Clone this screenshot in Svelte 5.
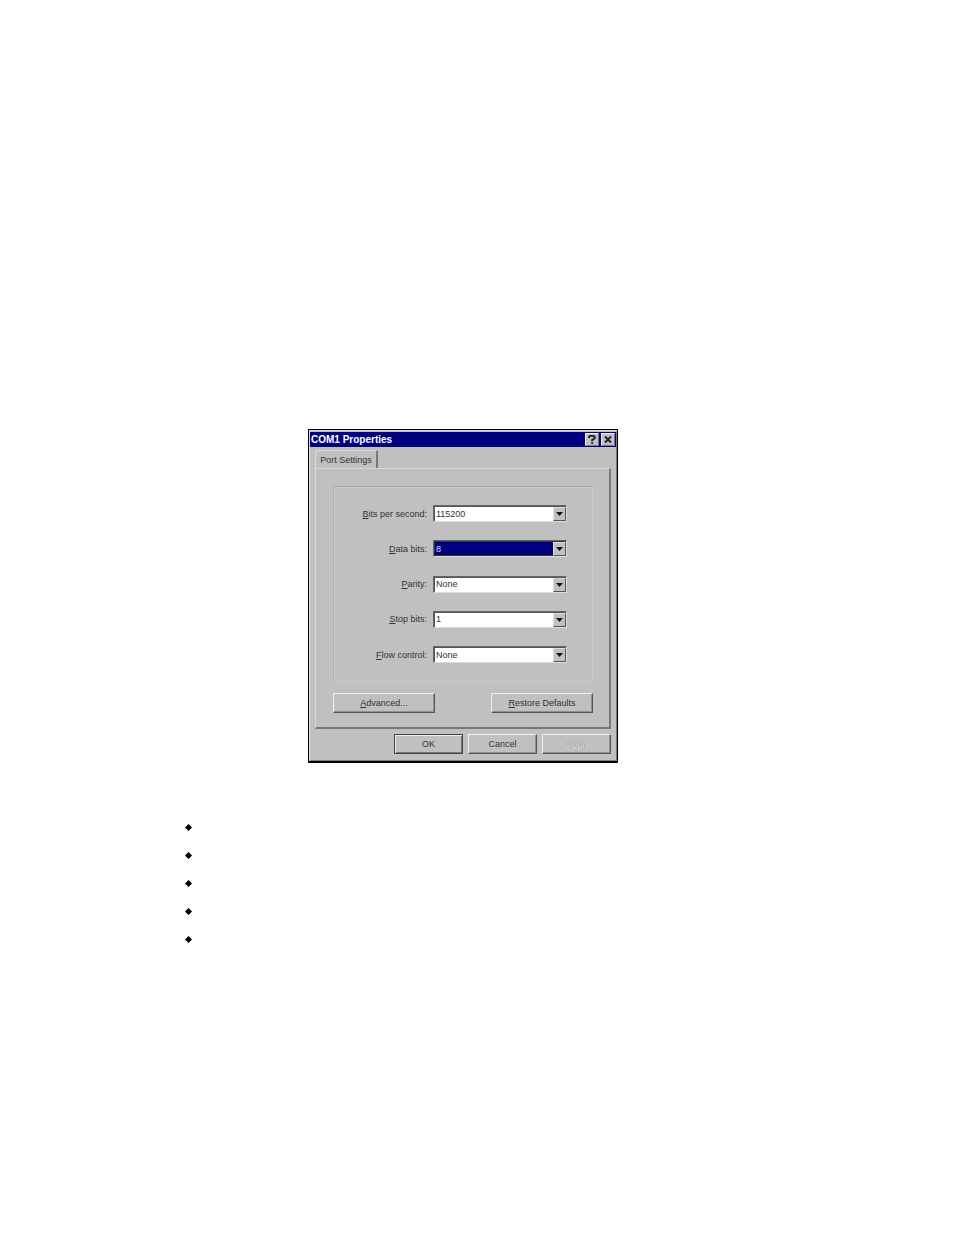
<script>
  let fields = [
    { id: "bits", key: "B", rest: "its per second:", value: "115200", options: ["9600", "57600", "115200"] },
    { id: "data", key: "D", rest: "ata bits:", value: "8", options: ["7", "8"], active: true },
    { id: "parity", key: "P", rest: "arity:", value: "None", options: ["None", "Even", "Odd"] },
    { id: "stop", key: "S", rest: "top bits:", value: "1", options: ["1", "2"] },
    { id: "flow", key: "F", rest: "low control:", value: "None", options: ["None", "Hardware"] },
  ];
  let bullets = [1, 2, 3, 4, 5];
</script>

<main>
  <section class="window" aria-label="COM1 Properties">
    <header>
      <h1>COM1 Properties</h1>
      <button class="caption" aria-label="Help">
        <svg width="8" height="9" viewBox="0 0 8 9">
          <path d="M1 3V1.8L2 .8H5.5L6.7 2V3.2L4.2 5V6.2M4.2 7.2V9" />
        </svg>
      </button>
      <button class="caption" aria-label="Close">
        <svg width="8" height="9" viewBox="0 0 8 9">
          <path d="M1 1.5L7 7.5M7 1.5L1 7.5" />
        </svg>
      </button>
    </header>

    <div class="body">
      <div role="tablist">
        <button class="tab" role="tab" aria-selected="true">Port Settings</button>
      </div>
      <div class="panel">
        <div class="group">
          {#each fields as field}
            <div class="row">
              <label for={field.id}><u>{field.key}</u>{field.rest}</label>
              <div class="combo" class:active={field.active}>
                <select id={field.id} bind:value={field.value}>
                  {#each field.options as option}
                    <option>{option}</option>
                  {/each}
                </select>
                <span class="arrow">
                  <svg width="7" height="4" viewBox="0 0 7 4">
                    <path d="M0 0H7L3.5 4Z" />
                  </svg>
                </span>
              </div>
            </div>
          {/each}
        </div>
        <div class="tools">
          <button class="btn wide"><u>A</u>dvanced...</button>
          <button class="btn wide"><u>R</u>estore Defaults</button>
        </div>
      </div>
      <footer>
        <button class="btn default">OK</button>
        <button class="btn">Cancel</button>
        <button class="btn" disabled>Apply</button>
      </footer>
    </div>
  </section>

  <ul>
    {#each bullets as bullet}
      <li>
        <svg width="7" height="7" viewBox="0 0 7 7">
          <path d="M3.5 0L7 3.5L3.5 7L0 3.5Z" />
        </svg>
      </li>
    {/each}
  </ul>
</main>

<style>
  :global(body) {
    margin: 0;
    background: #fff;
  }

  main {
    padding: 429px 213px 40px 185px;
    font-family: "Liberation Sans", Arial, sans-serif;
    font-size: 9px;
    line-height: 12px;
    color: #333;
  }

  button,
  select {
    font: inherit;
    color: inherit;
    margin: 0;
    padding: 0;
    box-sizing: border-box;
  }

  .window {
    box-sizing: border-box;
    max-width: 310px;
    margin: 0 auto;
    background: #c0c0c0;
    border: 1px solid #000;
    border-bottom-width: 2px;
    box-shadow: inset 1px 1px #dcdcdc, inset -1px -1px #808080;
    padding: 2px 1px 7px;
  }

  header {
    display: flex;
    align-items: center;
    gap: 2px;
    height: 15px;
    padding: 0 1px;
    background: #000080;
  }

  h1 {
    flex: 1;
    margin: 0;
    font-size: 10px;
    line-height: 12px;
    color: #fff;
  }

  .caption {
    display: flex;
    align-items: center;
    justify-content: center;
    width: 14px;
    height: 13px;
    background: #c0c0c0;
    border: 1px solid;
    border-color: #eee #777 #777 #eee;
  }

  .caption path {
    fill: none;
    stroke: #222;
    stroke-width: 2;
  }

  .body {
    padding: 3px 5px 0;
  }

  .tab {
    display: block;
    height: 18px;
    width: 63px;
    background: #c0c0c0;
    border: 1px solid #d8d8d8;
    border-right: 2px solid #777;
    border-bottom: none;
    border-radius: 2px 2px 0 0;
    white-space: nowrap;
  }

  .panel {
    border: 1px solid #d8d8d8;
    border-right: 2px solid #777;
    border-bottom: 2px solid #777;
    padding: 17px 16px 14px 17px;
  }

  .group {
    display: flex;
    flex-direction: column;
    justify-content: space-between;
    box-sizing: border-box;
    height: 196px;
    padding: 18px 25px;
    border: 1px solid #b2b2b2;
    border-color: #a4a4a4 #cacaca #cacaca #b2b2b2;
    box-shadow: inset 1px 1px #cacaca;
  }

  .row {
    display: flex;
    align-items: center;
    gap: 6px;
  }

  .row label {
    flex: 1;
    text-align: right;
    white-space: nowrap;
  }

  .combo {
    position: relative;
    flex: none;
    box-sizing: border-box;
    width: 134px;
    height: 17px;
    background: #fff;
    border: 1px solid;
    border-color: #666 #ddd #ddd #666;
    box-shadow: inset 1px 1px #555;
  }

  .combo select {
    display: block;
    width: 100%;
    height: 15px;
    padding: 0 16px 0 2px;
    appearance: none;
    background: none;
    border: none;
    border-radius: 0;
  }

  .active select {
    color: #ddf;
    background: #000080;
    border: 1px solid #333;
    padding-left: 1px;
  }

  .arrow {
    position: absolute;
    top: 1px;
    right: 0;
    bottom: 0;
    display: flex;
    align-items: center;
    justify-content: center;
    box-sizing: border-box;
    width: 13px;
    background: #c0c0c0;
    border: 1px solid;
    border-color: #ddd #555 #555 #ddd;
    pointer-events: none;
  }

  .arrow path {
    fill: #111;
  }

  .tools {
    display: flex;
    justify-content: space-between;
    margin-top: 11px;
  }

  .btn {
    width: 69px;
    height: 20px;
    background: #c0c0c0;
    border: 1px solid;
    border-color: #eee #555 #555 #eee;
    box-shadow: inset -1px -1px #909090;
  }

  .btn.wide {
    width: 102px;
  }

  .btn.default {
    border-color: #444;
    box-shadow: inset 1px 1px #eee, inset -1px -1px #777;
  }

  .btn:disabled {
    color: #aaa;
    text-shadow: 1px 1px #d8d8d8;
  }

  footer {
    display: flex;
    justify-content: flex-end;
    gap: 5px;
    margin-top: 5px;
  }

  ul {
    display: flex;
    flex-direction: column;
    gap: 21px;
    margin: 61px 0 0;
    padding: 0;
    list-style: none;
  }

  li {
    height: 7px;
  }

  li svg {
    display: block;
  }
</style>
